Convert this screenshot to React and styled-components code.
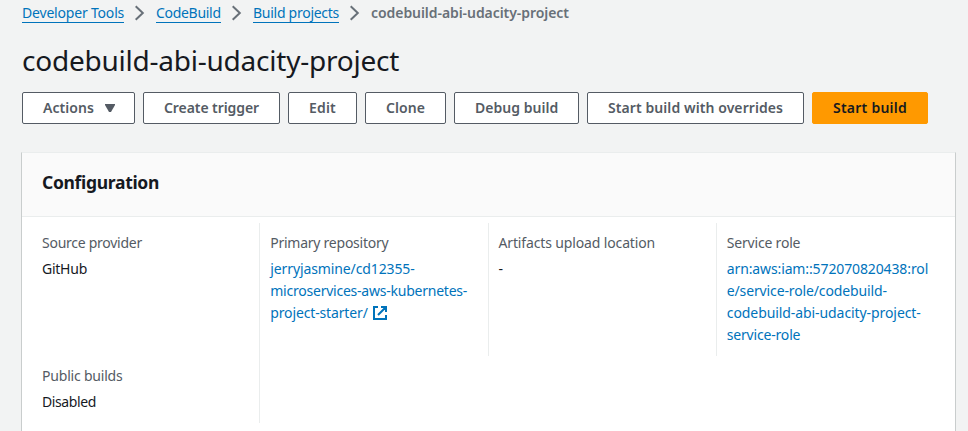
import React from "react";
import styled, { createGlobalStyle } from "styled-components";

const GlobalStyle = createGlobalStyle`
  * { box-sizing: border-box; }
  body {
    margin: 0;
    background: #f2f3f3;
    color: #16191f;
    font: 14px/22px "Noto Sans", "Open Sans", sans-serif;
    overflow: hidden;
  }
`;

const Page = styled.div`
  display: flex;
  flex-direction: column;
  height: 431px;
  padding: 2px 12px 0 21px;
  overflow: hidden;
`;

const Text = styled.span`
  display: block;
  white-space: nowrap;
  letter-spacing: ${(p) => p.$track || 0}px;
`;

const Breadcrumbs = styled.nav`
  display: flex;
  align-items: flex-start;
  height: 22px;
  padding-left: 1px;
`;

const Crumb = styled.a`
  height: 21px;
  width: ${(p) => p.$width}px;
  border-bottom: 1px solid #0073bb;
  color: #0073bb;
`;

const CurrentCrumb = styled.span`
  color: #687078;
  font-weight: 600;
`;

const Separator = styled.svg`
  flex: none;
  width: 16px;
  height: 16px;
  margin: 3px 8px 0;
  fill: none;
  stroke: #687078;
  stroke-width: 2;
`;

const Title = styled.h1`
  margin: 18px 0 0 1px;
  font-size: 28px;
  line-height: 36px;
  font-weight: 400;
`;

const Actions = styled.div`
  display: flex;
  gap: 8px;
  margin: 14px 0 0 1px;
`;

const Button = styled.button`
  display: flex;
  align-items: center;
  flex: none;
  width: ${(p) => p.$width}px;
  height: 32px;
  padding: 0 20px;
  border: 1px solid ${(p) => (p.$primary ? "#ff9900" : "#545b64")};
  border-radius: 2px;
  background: ${(p) => (p.$primary ? "#ff9900" : "#ffffff")};
  color: ${(p) => (p.$primary ? "#16191f" : "#545b64")};
  font: 600 14px/20px "Noto Sans", "Open Sans", sans-serif;
`;

const Caret = styled.svg`
  flex: none;
  width: 10px;
  height: 8px;
  margin-left: 11px;
  fill: #545b64;
`;

const Panel = styled.section`
  flex: 1;
  margin-top: 28px;
  border: 1px solid #c9cdcd;
  border-top-color: #eaeded;
  border-bottom: 0;
  background: #ffffff;
`;

const PanelHeader = styled.header`
  display: flex;
  align-items: center;
  height: 64px;
  padding: 0 20px 6px;
  border-bottom: 1px solid #eaeded;
  background: #fafafa;
`;

const PanelTitle = styled.h2`
  margin: 0;
  font-size: 17.5px;
  line-height: 22px;
  font-weight: 700;
`;

const Fields = styled.dl`
  display: grid;
  grid-template-columns: repeat(4, 1fr);
  grid-template-rows: 133px 67px;
  margin: 0;
  padding: 6px 10px 0;
`;

const Field = styled.div`
  padding: 9px 10px 10px;
  border-right: ${(p) => (p.$last ? "0" : "1px solid #eaeded")};
`;

const Label = styled.dt`
  color: #545b64;
`;

const Value = styled.dd`
  margin: 4px 0 0;
`;

const Link = styled.a`
  color: #0073bb;
`;

const LinkEnd = styled.span`
  display: flex;
  align-items: center;
`;

const ExternalIcon = styled.svg`
  flex: none;
  width: 16px;
  height: 16px;
  margin-left: 4px;
  fill: none;
  stroke: #0073bb;
  stroke-width: 2;
`;

const crumbs = [
  { text: "Developer Tools", width: 102, track: -0.19 },
  { text: "CodeBuild", width: 65, track: -0.3 },
  { text: "Build projects", width: 86, track: -0.27 },
];

const buttons = [
  { text: "Actions", width: 113, track: 0.06, menu: true },
  { text: "Create trigger", width: 137, track: -0.08 },
  { text: "Edit", width: 69, track: 0.19 },
  { text: "Clone", width: 81, track: 0.07 },
  { text: "Debug build", width: 125, track: 0.03 },
  { text: "Start build with overrides", width: 217, track: 0.08 },
  { text: "Start build", width: 116, track: 0.24, primary: true },
];

export default function App() {
  return (
    <>
      <GlobalStyle />
      <Page>
        <Breadcrumbs>
          {crumbs.map((c) => (
            <React.Fragment key={c.text}>
              <Crumb $width={c.width}>
                <Text $track={c.track}>{c.text}</Text>
              </Crumb>
              <Separator viewBox="0 0 16 16">
                <path d="M3.7 1.2L10.8 8l-7.1 6.8" />
              </Separator>
            </React.Fragment>
          ))}
          <CurrentCrumb>
            <Text $track={-0.06}>codebuild-abi-udacity-project</Text>
          </CurrentCrumb>
        </Breadcrumbs>
        <Title>
          <Text $track={-0.23}>codebuild-abi-udacity-project</Text>
        </Title>
        <Actions>
          {buttons.map((b) => (
            <Button key={b.text} $width={b.width} $primary={b.primary}>
              <Text $track={b.track}>{b.text}</Text>
              {b.menu && (
                <Caret viewBox="0 0 10 8">
                  <path d="M0 0h10v1L6 8H4L0 1z" />
                </Caret>
              )}
            </Button>
          ))}
        </Actions>
        <Panel>
          <PanelHeader>
            <PanelTitle>
              <Text $track={-0.31}>Configuration</Text>
            </PanelTitle>
          </PanelHeader>
          <Fields>
            <Field>
              <Label><Text $track={-0.26}>Source provider</Text></Label>
              <Value><Text $track={-0.25}>GitHub</Text></Value>
            </Field>
            <Field>
              <Label><Text $track={-0.25}>Primary repository</Text></Label>
              <Value>
                <Link>
                  <Text $track={-0.11}>jerryjasmine/cd12355-</Text>
                  <Text $track={-0.23}>microservices-aws-kubernetes-</Text>
                  <LinkEnd>
                    <Text $track={-0.14}>project-starter/</Text>
                    <ExternalIcon viewBox="0 0 16 16">
                      <path d="M6 2H2v12h12v-4M9 2h5v5M14 2L6 10" />
                    </ExternalIcon>
                  </LinkEnd>
                </Link>
              </Value>
            </Field>
            <Field>
              <Label><Text $track={-0.14}>Artifacts upload location</Text></Label>
              <Value>-</Value>
            </Field>
            <Field $last>
              <Label><Text $track={-0.19}>Service role</Text></Label>
              <Value>
                <Link>
                  <Text $track={-0.12}>arn:aws:iam::572070820438:rol</Text>
                  <Text $track={-0.13}>e/service-role/codebuild-</Text>
                  <Text $track={-0.08}>codebuild-abi-udacity-project-</Text>
                  <Text $track={-0.18}>service-role</Text>
                </Link>
              </Value>
            </Field>
            <Field>
              <Label><Text $track={-0.2}>Public builds</Text></Label>
              <Value><Text $track={-0.39}>Disabled</Text></Value>
            </Field>
          </Fields>
        </Panel>
      </Page>
    </>
  );
}
